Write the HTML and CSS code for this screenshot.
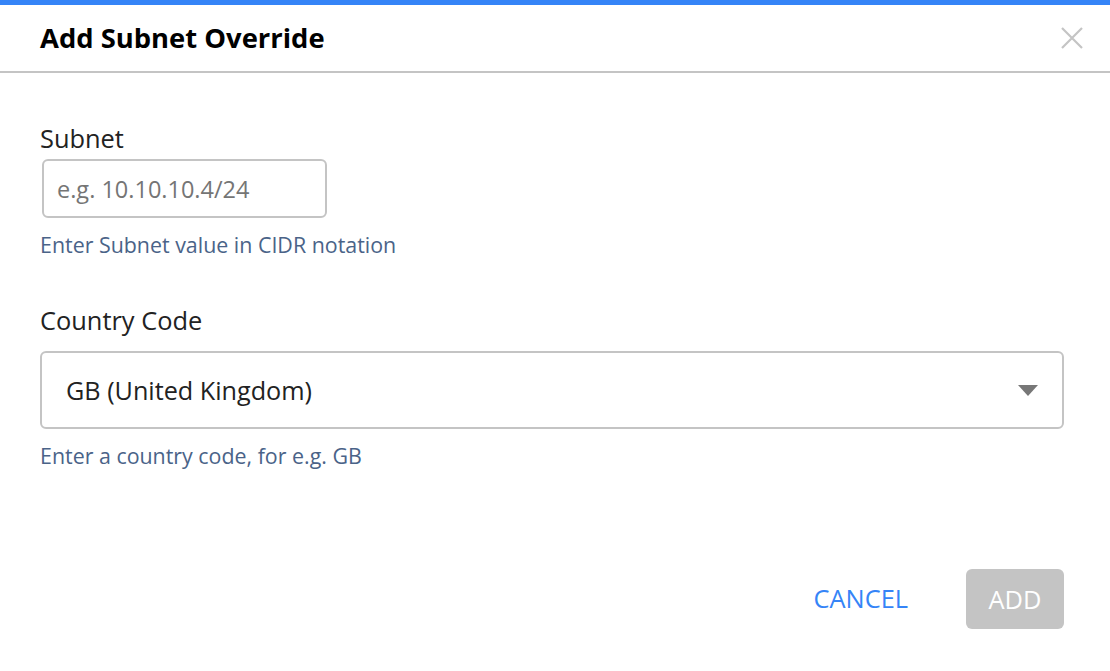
FILE: index.html
```html
<!DOCTYPE html>
<html>
<head>
<meta charset="utf-8">
<link rel="stylesheet" href="styles.css">
</head>
<body>
<div class="dialog">
  <div class="topbar"></div>
  <div class="header">
    <h1 class="title">Add Subnet Override</h1>
    <button class="close" aria-label="Close">
      <svg width="22" height="22" viewBox="0 0 22 22"><path d="M1 1L21 21M21 1L1 21" stroke="#c4c4c4" stroke-width="2.2" fill="none"/></svg>
    </button>
  </div>
  <div class="body">
    <div class="field">
      <label class="label">Subnet</label>
      <div class="input small"><span class="placeholder">e.g. 10.10.10.4/24</span></div>
      <div class="help">Enter Subnet value in CIDR notation</div>
    </div>
    <div class="field second">
      <label class="label">Country Code</label>
      <div class="input select"><span class="value">GB (United Kingdom)</span>
        <svg class="caret" width="20" height="11" viewBox="0 0 20 11"><path d="M0 0H20L10 11Z" fill="#777"/></svg>
      </div>
      <div class="help">Enter a country code, for e.g. GB</div>
    </div>
  </div>
  <div class="footer">
    <button class="btn cancel">CANCEL</button>
    <button class="btn add">ADD</button>
  </div>
</div>
</body>
</html>
```
FILE: styles.css
```css
html, body { margin: 0; padding: 0; background: #fff; }
body { font-family: "Open Sans", "Lato", sans-serif; color: #222; width: 1110px; height: 671px; overflow: hidden; }
.dialog { display: flex; flex-direction: column; height: 671px; }
.topbar { height: 5px; background: #3584f7; }
.header { height: 66px; border-bottom: 2px solid #c4c4c4; display: flex; align-items: center; justify-content: space-between; padding: 0 27px 0 40px; }
.title { margin: 0; font-size: 27.4px; font-weight: 700; color: #000; margin-top: -1px; }
.close { background: none; border: 0; padding: 0; width: 22px; height: 22px; display: flex; cursor: pointer; }
.body { padding: 50px 46px 0 40px; display: flex; flex-direction: column; }
.field { display: flex; flex-direction: column; }
.field.second { margin-top: 47px; }
.label { font-size: 25.4px; line-height: 30px; color: #222; margin-bottom: 6px; }
.input { border: 2px solid #c4c4c4; border-radius: 6px; box-sizing: border-box; display: flex; align-items: center; flex-shrink: 0; }
.input.small { width: 285px; height: 59px; margin-left: 2px; padding-left: 13px; }
.placeholder { font-size: 23.5px; color: #757575; }
.input.select { height: 78px; margin-top: 10px; padding: 0 24px 0 24px; justify-content: space-between; }
.value { font-size: 25.2px; color: #222; }
.help { font-size: 21.4px; color: #4a6388; margin-top: 14px; line-height: 26px; }
.second .help { margin-top: 14px; }
.footer { margin-top: auto; display: flex; justify-content: flex-end; align-items: center; gap: 58px; padding: 0 46px 42px 0; }
.btn { font-family: inherit; font-size: 25.4px; border: 0; cursor: pointer; }
.cancel { background: none; color: #3584f7; padding: 0; margin-bottom: 3px; }
.add { background: #c4c4c4; color: #fff; width: 98px; height: 60px; border-radius: 6px; padding: 0; }
```
